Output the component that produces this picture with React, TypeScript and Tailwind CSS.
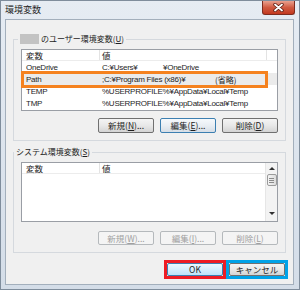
import type { ReactNode } from 'react'

type BtnKind = 'normal' | 'focus' | 'default' | 'disabled'

const btnStyles: Record<BtnKind, string> = {
    normal: 'border-[#707070] bg-linear-to-b from-[#f4f4f4] via-[#e8e8e8] to-[#d4d4d4] text-[#1e1e1e]',
    focus: 'border-[#3c7fb1] bg-linear-to-b from-[#f6f9fc] via-[#e9eef3] to-[#d6dee6] text-[#1e1e1e]',
    default: 'border-[#3c7fb1] bg-linear-to-b from-[#eef8fe] via-[#d6eefc] to-[#bde3f8] text-[#1e1e1e]',
    disabled: 'border-[#b5b9bc] bg-[#f4f4f4] text-[#a0a0a0]',
}

function Btn({
    children,
    kind = 'normal',
    className = 'h-[15px] w-[56px]',
}: {
    children: ReactNode
    kind?: BtnKind
    className?: string
}) {
    return (
        <button
            className={`flex items-center justify-center rounded-[2px] border text-[8.5px] leading-none ${btnStyles[kind]} ${className}`}
        >
            {children}
        </button>
    )
}

const Key = ({ k }: { k: string }) => <span className="underline underline-offset-1">{k}</span>

function Triangle({ down }: { down?: boolean }) {
    return down ? (
        <div className="h-0 w-0 border-x-[3px] border-t-[3px] border-x-transparent border-t-[#303030]" />
    ) : (
        <div className="h-0 w-0 border-x-[3px] border-b-[3px] border-x-transparent border-b-[#303030]" />
    )
}

const rows = [
    {
        name: 'OneDrive',
        value: (
            <>
                <span className="w-[61px]">C:¥Users¥</span>
                <span>¥OneDrive</span>
            </>
        ),
    },
    {
        name: 'Path',
        value: (
            <>
                <span className="w-[113px]">;C:¥Program Files (x86)¥</span>
                <span className="font-['Noto_Sans_CJK_JP',sans-serif] text-[8px] tracking-normal">(省略)</span>
            </>
        ),
        selected: true,
    },
    { name: 'TEMP', value: <span>%USERPROFILE%¥AppData¥Local¥Temp</span> },
    { name: 'TMP', value: <span>%USERPROFILE%¥AppData¥Local¥Temp</span> },
]

export default function App() {
    return (
        <div className="flex h-[290px] w-[300px] flex-col border border-[#7f8d9c] bg-linear-to-b from-[#e6ecf3] to-[#d4dde8] font-['Noto_Sans_CJK_JP','Noto_Sans',sans-serif] text-[#1e1e1e]">
            {/* title bar */}
            <div className="flex h-[18px] shrink-0 items-start">
                <span className="pt-[3px] pl-[4px] text-[9px] leading-[12px]">環境変数</span>
                <button className="mr-[4px] ml-auto flex h-[14px] w-[33px] items-center justify-center rounded-b-[3px] border border-t-0 border-[#7d2c1f] bg-linear-to-b from-[#e9a08f] via-[#d05a41] to-[#c2381f]">
                    <svg width="11" height="9" viewBox="0 0 11 9">
                        <path d="M2 1.5 L9 7.5 M9 1.5 L2 7.5" stroke="#5a1a10" strokeWidth="3.4" strokeLinecap="round" />
                        <path d="M2 1.5 L9 7.5 M9 1.5 L2 7.5" stroke="#ffffff" strokeWidth="1.8" strokeLinecap="round" />
                    </svg>
                </button>
            </div>

            {/* client area */}
            <div className="ml-[4px] flex h-[266px] w-[289px] flex-col border border-[#a3afbc] bg-[#f0f0f0]">
                {/* user variables */}
                <fieldset className="mt-[13px] ml-[7px] w-[272px] border border-[#d5d9de] px-[7px] pt-[4px] pb-[7px]">
                    <legend className="-ml-[3px] flex items-center px-[2px] text-[8px] leading-[12px]">
                        <span className="inline-block h-[10px] w-[19px] bg-[#c3c3c3]" />
                        <span className="ml-[2px]">
                            のユーザー環境変数(<Key k="U" />)
                        </span>
                    </legend>
                    <div className="h-[62px] w-[257px] border border-[#9a9ea5] bg-white text-[8.5px]">
                        <div className="flex h-[11px] items-center border-b border-[#ececec]">
                            <div className="h-full w-[78px] border-r border-[#e3e3e3] pl-[4px] leading-[10px]">変数</div>
                            <div className="h-full w-[167px] border-r border-[#e3e3e3] pl-[2px] leading-[10px]">値</div>
                        </div>
                        {rows.map((r) => (
                            <div
                                key={r.name}
                                className={`relative flex h-[12px] items-center font-['Liberation_Sans',sans-serif] text-[8px] leading-[11px] tracking-[-0.25px] ${r.selected ? 'bg-[#ebebeb]' : ''}`}
                            >
                                <div className="w-[78px] pl-[4px]">{r.name}</div>
                                <div className="flex items-center pl-[2px] whitespace-nowrap">{r.value}</div>
                                {r.selected && (
                                    <div className="absolute -top-[2px] -left-[1px] h-[17px] w-[247px] border-[3px] border-[#f5821f]" />
                                )}
                            </div>
                        ))}
                    </div>
                    <div className="mt-[7px] flex justify-end gap-[6px]">
                        <Btn>
                            新規(<Key k="N" />)...
                        </Btn>
                        <Btn kind="focus">
                            編集(<Key k="E" />)...
                        </Btn>
                        <Btn>
                            削除(<Key k="D" />)
                        </Btn>
                    </div>
                </fieldset>

                {/* system variables */}
                <fieldset className="mt-[5px] ml-[7px] w-[272px] border border-[#d5d9de] px-[7px] pt-[4px] pb-[7px]">
                    <legend className="-ml-[7px] px-[2px] text-[8px] leading-[12px]">
                        システム環境変数(<Key k="S" />)
                    </legend>
                    <div className="flex h-[60px] w-[257px] border border-[#9a9ea5] bg-white text-[8.5px]">
                        <div className="flex-1">
                            <div className="flex h-[11px] border-b border-[#ececec]">
                                <div className="h-full w-[78px] border-r border-[#e3e3e3] pl-[4px] leading-[10px]">変数</div>
                                <div className="h-full flex-1 pl-[2px] leading-[10px]">値</div>
                            </div>
                        </div>
                        <div className="flex w-[12px] flex-col items-center border-l border-[#e6e6e6] bg-[#f3f3f3]">
                            <div className="flex h-[10px] items-center">
                                <Triangle />
                            </div>
                            <div className="mt-[1px] flex h-[12px] w-[10px] flex-col items-center justify-center gap-[1px] rounded-[2px] border border-[#9b9b9b] bg-linear-to-r from-[#f4f4f4] to-[#dcdcdc]">
                                <div className="h-px w-[5px] bg-[#8a8a8a]" />
                                <div className="h-px w-[5px] bg-[#8a8a8a]" />
                                <div className="h-px w-[5px] bg-[#8a8a8a]" />
                            </div>
                            <div className="flex-1" />
                            <div className="mb-[3px] flex h-[10px] items-center">
                                <Triangle down />
                            </div>
                        </div>
                    </div>
                    <div className="mt-[9px] flex justify-end gap-[6px]">
                        <Btn kind="disabled" className="h-[14px] w-[56px]">
                            新規(<Key k="W" />)...
                        </Btn>
                        <Btn kind="disabled" className="h-[14px] w-[56px]">
                            編集(<Key k="I" />)...
                        </Btn>
                        <Btn kind="disabled" className="h-[14px] w-[56px]">
                            削除(<Key k="L" />)
                        </Btn>
                    </div>
                </fieldset>

                {/* OK / Cancel */}
                <div className="mt-[7px] mr-[5px] flex justify-end">
                    <div className="h-[19px] w-[62px] border-[3px] border-[#ed1c24]">
                        <Btn kind="default" className="h-full w-full">
                            OK
                        </Btn>
                    </div>
                    <div className="h-[19px] w-[62px] border-[3px] border-[#00a2e8]">
                        <Btn className="h-full w-full">キャンセル</Btn>
                    </div>
                </div>
            </div>
        </div>
    )
}
